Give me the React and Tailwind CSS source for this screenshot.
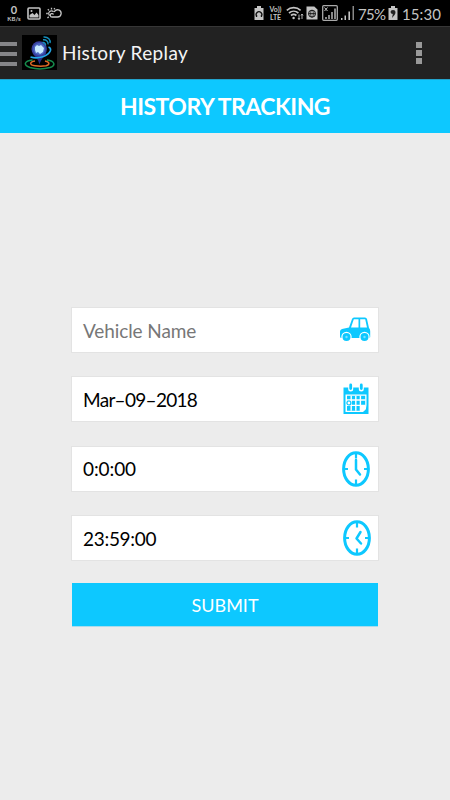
function StatusBar() {
  return (
    <div className="flex h-[26px] w-full items-center bg-black text-[#c4c4c4]">
      <div className="ml-[5px] flex w-[18px] flex-col items-center gap-px">
        <span className="text-[11px] leading-[10px] font-bold">0</span>
        <span className="text-[6px] leading-[6px] font-bold whitespace-nowrap">KB/s</span>
      </div>
      <svg className="ml-[4px]" width="14" height="13" viewBox="0 0 14 13">
        <rect x="1" y="1" width="12" height="11" rx="1" fill="none" stroke="#c4c4c4" strokeWidth="1.6" />
        <path d="M2.5 10.5V8l3-2 2 2 2-2.5 2 2.5v2.5z" fill="#c4c4c4" />
        <circle cx="4.5" cy="4" r="1" fill="#c4c4c4" />
      </svg>
      <svg className="ml-[5px]" width="16" height="13" viewBox="0 0 16 13" fill="none" stroke="#c4c4c4" strokeWidth="1.3">
        <path d="M6 10H11.500a3.600 3.600 0 1 0-3.300-5M6 10A1.700 1.700 0 1 1 7.500 7.500M3.500 8.500A2.700 2.700 0 0 1 7.500 4.700" />
        <path d="M5.500 0.8v1.700M1.800 2.200l1.200 1.200M0.200 6.500H1.800M1.500 11L2.700 9.800M8.800 1.200L8 2.400" />
      </svg>
      <div className="grow" />
      <svg width="10" height="14" viewBox="0 0 10 14">
        <path d="M3 0h4v2h2.5v12h-9V2H3z" fill="#c4c4c4" />
        <path d="M3 10.500A2.800 2.800 0 1 1 7 10.500M2.500 9v2M7.500 9v2" stroke="#111" strokeWidth="1.3" fill="none" />
      </svg>
      <div className="ml-[4px] flex w-[15px] flex-col items-center text-[7px] leading-[8px] font-bold">
        <span>Vo))</span>
        <span>LTE</span>
      </div>
      <svg className="ml-[3px]" width="18" height="14" viewBox="0 0 18 14" fill="none" stroke="#c4c4c4" strokeWidth="1.7">
        <path d="M0.8 4.3a10.5 10.5 0 0 1 13.8 0M3 7a7.2 7.2 0 0 1 9.4 0M5 9.5a4 4 0 0 1 5.400 0" />
        <circle cx="7.6" cy="12" r="1.200" fill="#c4c4c4" stroke="none" />
        <path d="M13 8.500v5M12 12l1 1.500 1-1.500M16 13V8M15 9.500L16 8l1 1.500" strokeWidth="0.9" />
      </svg>
      <svg className="ml-[2px]" width="12" height="14" viewBox="0 0 12 14">
        <path d="M0.5 0.5h7.8l3.2 3v10h-11z" fill="#c4c4c4" />
        <g fill="none" stroke="#111">
          <circle cx="6" cy="7.7" r="3.5" />
          <ellipse cx="6" cy="7.7" rx="1.4" ry="3.5" strokeWidth=".7" />
          <path d="M2.5 7.7h7" />
        </g>
      </svg>
      <svg className="ml-[4px]" width="16" height="16" viewBox="0 0 16 16">
        <rect x="0.7" y="0.7" width="14.6" height="14.6" rx="1" fill="none" stroke="#aaa" strokeWidth="1.3" />
        <path d="M3 14v-2h2v2zM6 14v-4h2v4zM9 14V7h2v7zM12 14V3.500h2V14z" fill="#888" />
        <path d="M2.500 2.500l3 3.500M5.500 2.500l-3 3.500" stroke="#c4c4c4" />
      </svg>
      <svg className="ml-[3px]" width="13" height="14" viewBox="0 0 13 14">
        <path d="M0 14v-2h1.5v2zM3.5 14v-4.5H5V14zM7.4 14V5.5H9V14z" fill="#c4c4c4" />
        <path d="M11.5 14V0H13v14z" fill="#888" />
      </svg>
      <span className="ml-[4px] w-[29px] pt-[2px] text-[15px] tracking-[-0.7px]">75%</span>
      <svg className="ml-px" width="10" height="14" viewBox="0 0 10 14">
        <path d="M3 0h4v2h2.5v12h-9V2H3z" fill="#c4c4c4" />
        <path d="M2.5 6q0-2 2.500-2t2.500 2q0 2-1 3L4 12l.800-4q-2 0-2.300-2z" fill="#222" />
      </svg>
      <span className="mr-[8px] ml-[4px] w-[40px] pt-[2px] text-[15px] tracking-[0.1px]">15:30</span>
    </div>
  );
}

function Logo() {
  return (
    <svg className="ml-[5px]" width="35" height="35" viewBox="0 0 35 35">
      <rect width="35" height="35" fill="#000" />
      <g fill="none">
        <path d="M10.500 25C2 26 1 30 8 32.500c6 1.700 14 1.700 20 0 6-2 5-6.500-3-7.500" stroke="#168b4c" strokeWidth="1.5" />
        <path d="M13 26c-6 1-5.500 4 0 4.700 4 .600 8 .500 11 0 4-1 4-3.700-1-4.700" stroke="#df6a25" strokeWidth="1.500" />
      </g>
      <path d="M10.500 18c2 4 5 4 7 11.500 2-7 5-7 7-11.500z" fill="#292c80" />
      <circle cx="17.200" cy="14" r="7.700" fill="#3940a0" />
      <circle cx="17.200" cy="14" r="6" fill="#4a66c0" />
      <path d="M13 12l2-2 2 1 2-1 3 3-1 4-3 2-2-2-2 1-1-3z" fill="#c9eaff" />
      <path d="M8.500 22c8 2.500 18-1 20-6.500 .400-1.800-.5-3-2-3.500" fill="none" stroke="#24a7e8" strokeWidth="1.6" />
      <path d="M20.500 7.500c2-.3 3.300 1 3 3M21 4.800c3.500-.5 5.500 2 5 4.500M21.500 2c5-.3 7.200 3 6.500 6" fill="none" stroke="#168fbc" strokeWidth="1.4" />
    </svg>
  );
}

function AppBar() {
  return (
    <div className="flex h-[52.5px] items-center border-t border-[#363636] bg-[#222222]">
      <div className="flex w-[17px] flex-col gap-[6px] pt-[2px]">
        <div className="h-[4px] bg-[#858588]" />
        <div className="h-[4px] bg-[#858588]" />
        <div className="h-[4px] bg-[#858588]" />
      </div>
      <Logo />
      <span className="ml-[5px] pt-px text-[19px] tracking-[0.35px] text-[#f4f4f4]">History Replay</span>
      <div className="mr-[28px] ml-auto flex flex-col gap-[2px]">
        <div className="size-[6px] bg-[#999]" />
        <div className="size-[6px] bg-[#999]" />
        <div className="size-[6px] bg-[#999]" />
      </div>
    </div>
  );
}

function CarIcon() {
  return (
    <svg width="32" height="26" viewBox="0 0 32 26">
      <path d="M1 14.500Q1 12.500 3 12l7-1.500L13 2q.500-1.500 2-1.500h11q1.500 0 2 1.500l2 9q1.200 1 1.200 3v6q0 1-1.500 1H2.500q-1.500 0-1.500-1.500z" fill="#0dc8ff" />
      <path d="M12 10.500L14.800 2.200H19.500v8.300zM21.200 2.200h5l1.800 8.300h-6.800z" fill="#fff" />
      <g fill="#0dc8ff" stroke="#fff" strokeWidth="1.200">
        <circle cx="7.500" cy="20" r="4.600" />
        <circle cx="25.500" cy="20" r="4.600" />
      </g>
      <g fill="#7adfff">
        <circle cx="7.500" cy="20" r="1.200" />
        <circle cx="25.500" cy="20" r="1.200" />
      </g>
    </svg>
  );
}

function CalendarIcon() {
  return (
    <svg width="26" height="32" viewBox="0 0 26 32">
      <path d="M.5 4.500h25V31H.5z" fill="#0dc8ff" />
      <path d="M7.700 3v3M18.300 3v3" stroke="#fff" strokeWidth="5" strokeLinecap="round" />
      <path d="M7.700 2v3.500M18.300 2v3.500" stroke="#0dc8ff" strokeWidth="2.800" strokeLinecap="round" />
      <path d="M2.500 11.500h21V22q0 7-7 7h-14z" fill="#fff" />
      <path d="M4 12.800h18.200V22q0 5.700-5.700 5.700H4z" fill="#0dc8ff" />
      <path d="M8.200 12.800v15M12.800 12.800v15M17.400 12.800v15M4 17h18.500M4 22.400h18.500" stroke="#fff" strokeWidth="1.400" />
      <path d="M17.500 23h5.500v3l-3 3h-3z" fill="#fff" />
      <circle cx="5.900" cy="20" r="2" fill="#fff" stroke="#0dc8ff" strokeWidth="1.200" />
    </svg>
  );
}

function ClockIcon({ hands }) {
  return (
    <svg width="28" height="36" viewBox="0 0 28 36" fill="none" stroke="#0dc8ff">
      <ellipse cx="14" cy="18" rx="12.400" ry="16.300" strokeWidth="3" />
      <path d="M14 2v5.500M14 28.500v5.500M2 18h4M22 18h4" strokeWidth="2.200" />
      <path d={hands} strokeWidth="2.500" strokeLinecap="round" strokeLinejoin="round" />
    </svg>
  );
}

function Field({ children, icon }) {
  return (
    <div className="flex h-[46px] items-center border border-[#e3e3e3] bg-white pr-[6px] pl-[11px] text-[19px] text-black">
      {children}
      <div className="ml-auto flex">{icon}</div>
    </div>
  );
}

export default function App() {
  return (
    <div className="flex h-[800px] w-[450px] flex-col overflow-hidden bg-[#ececec] font-['Lato',sans-serif]">
      <StatusBar />
      <AppBar />
      <h1 className="flex h-[54.5px] items-center justify-center border-t border-[#23a3cc] bg-[#0dc8ff] text-[23px] font-bold text-white">
        <span className="tracking-[-0.5px]">HISTORY TRACKING</span>
      </h1>
      <div className="mx-auto mt-[174px] flex w-[308px] flex-col gap-[23.300px]">
        <Field icon={<div className="mr-px flex"><CarIcon /></div>}>
          <span className="pt-[2px] tracking-[-0.1px] text-[#777]">Vehicle Name</span>
        </Field>
        <Field icon={<div className="mr-[3px] flex"><CalendarIcon /></div>}>
          <span className="pt-[2px] tracking-[-0.7px]">Mar–09–2018</span>
        </Field>
        <Field icon={<div className="mr-[2px] flex"><ClockIcon hands="M14 9v9.500l4 5" /></div>}>
          <span className="pt-[2px] tracking-[-0.1px]">0:0:00</span>
        </Field>
        <Field icon={<div className="mr-px flex"><ClockIcon hands="M17.500 12l-4 6.500 4.500 5" /></div>}>
          <span className="pt-[2px] tracking-[-0.3px]">23:59:00</span>
        </Field>
      </div>
      <button className="mx-auto mt-[22px] h-[44px] w-[306px] border-b border-[#a9dced] bg-[#0dc8ff] pt-[3px] text-[18px] text-white">
        SUBMIT
      </button>
    </div>
  );
}
